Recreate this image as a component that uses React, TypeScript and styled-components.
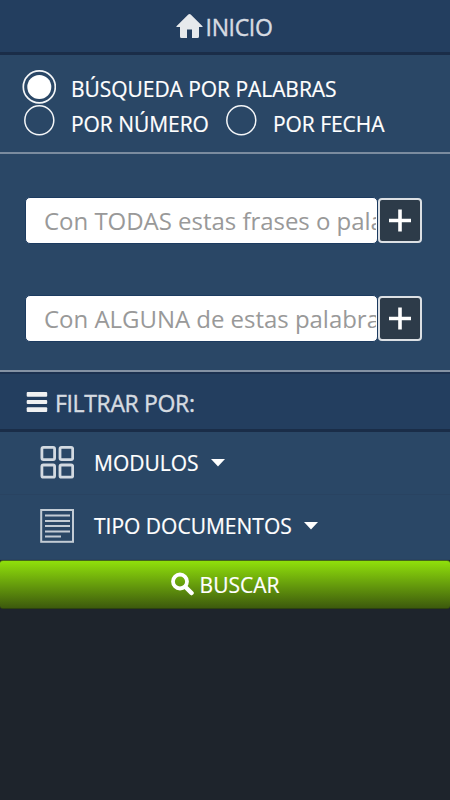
import React from 'react';
import styled, { createGlobalStyle } from 'styled-components';

const GlobalStyle = createGlobalStyle`
  * { box-sizing: border-box; }
  body { margin: 0; background: #1e242c; font-family: "Open Sans", sans-serif; color: #fff; }
  svg { display: block; flex: none; }
`;

const Page = styled.main`
  min-height: 800px;
  background: #1e242c;
`;

const Label = styled.span`
  font-size: 21px;
  line-height: 28px;
  white-space: nowrap;
  -webkit-text-stroke: 0.2px currentColor;
`;

const Bar = styled.header`
  display: flex;
  align-items: center;
  justify-content: center;
  gap: 3px;
  height: 55px;
  padding: 0 2px 1px 0;
  background: #233e5f;
  border-bottom: 3px solid #1a2d48;
  color: #d6dbe1;
  ${Label} {
    padding-top: 3px;
    font-size: 23px;
    letter-spacing: -0.35px;
    -webkit-text-stroke-width: 0.4px;
  }
`;

const FilterBar = styled(Bar)`
  justify-content: flex-start;
  gap: 7px;
  height: 60px;
  padding: 0 0 0 26px;
  border-top: 2px solid #1c3150;
`;

const Modes = styled.section`
  height: 99px;
  padding: 15px 0 0 22px;
  background: #2a4766;
  border-bottom: 2px solid #7b8c9f;
`;

const ModeRow = styled.div`
  display: flex;
  height: 34px;
`;

const Mode = styled.label<{ $width?: number; $drop?: number }>`
  display: flex;
  width: ${p => (p.$width ? `${p.$width}px` : 'auto')};
  gap: 15px;
  ${Label} { margin-top: ${p => p.$drop ?? 5}px; letter-spacing: -0.05px; }
`;

const Search = styled.section`
  display: flex;
  flex-direction: column;
  gap: 51px;
  height: 218px;
  padding: 43px 27px 0 25px;
  background: #2a4766;
  border-bottom: 2px solid #8492a4;
`;

const Field = styled.div`
  display: flex;
  height: 47px;
`;

const Input = styled.input`
  width: 353px;
  height: 47px;
  padding: 0 1px 0 18px;
  border: 1px solid #1c3b60;
  border-radius: 5px;
  background: #fff;
  font: 24px "Open Sans", sans-serif;
  letter-spacing: -0.03px;
  outline: none;
  &::placeholder { color: #999; opacity: 1; }
`;

const Add = styled.button`
  display: grid;
  place-items: center;
  width: 44px;
  height: 45px;
  margin-top: 1px;
  padding: 0;
  border: 2px solid #dce0e4;
  border-radius: 4px;
  background: #2d3b49;
`;

const FilterRow = styled.div<{ $h: number; $lift: number }>`
  display: flex;
  align-items: center;
  height: ${p => p.$h}px;
  padding: 0 0 ${p => p.$lift}px 40px;
  background: #2a4766;
  border-bottom: 1px solid #294361;
  ${Label} { margin: 0 12px 0 20px; }
`;

const Submit = styled.button`
  display: flex;
  align-items: center;
  justify-content: center;
  gap: 5px;
  width: 100%;
  height: 49px;
  padding: 0;
  border: 0;
  border-top: 1px solid #44661d;
  border-bottom: 1px solid #2c4210;
  border-radius: 3px;
  background: linear-gradient(#90e00b, #3d5a0d);
  color: #fff;
  font-family: inherit;
  svg { margin-bottom: 1px; }
`;

const Radio = ({ checked = false }: { checked?: boolean }) => (
  <svg width="34" height="34" viewBox="0 0 34 34" fill="none" stroke="#f4f6f8">
    {checked ? (
      <>
        <circle cx="17.3" cy="16.9" r="16" strokeWidth="1.7" />
        <circle cx="17.3" cy="16.9" r="12" fill="#fff" stroke="none" />
      </>
    ) : (
      <circle cx="17.3" cy="16.3" r="14.5" strokeWidth="1.5" />
    )}
  </svg>
);

const Home = () => (
  <svg width="27" height="24" viewBox="0 0 27 24" fill="#e6e9ec">
    <path d="M12.3.5Q13.5-.5 14.7.5L26.8 12.4Q27 13 26 13H23v9.5q0 1.5-1.5 1.5H16v-8.5h-5V24H5.5q-1.5 0-1.5-1.5V13H1Q0 13 .2 12.400z" />
  </svg>
);

const Menu = () => (
  <svg width="22" height="20" viewBox="0 0 22 20" fill="#f0f1f2">
    <rect width="20.5" height="4.8" x=".7" rx="1" />
    <rect width="20.5" height="4" x=".7" y="8" rx="1" />
    <rect width="20.5" height="4.8" x=".7" y="15.2" rx="1" />
  </svg>
);

const Plus = () => (
  <svg width="24" height="24" viewBox="0 0 24 24" stroke="#fff" strokeWidth="3.600">
    <path d="M12 .5v22M1 11.5h22" />
  </svg>
);

const Grid = () => (
  <svg width="34" height="34" viewBox="0 0 34 34" fill="none" stroke="#d3dae1" strokeWidth="2.8">
    <rect x="1.9" y="1.4" width="12.7" height="12.2" rx="1.5" />
    <rect x="20" y="1.4" width="12.7" height="12.2" rx="1.5" />
    <rect x="1.9" y="19" width="12.7" height="12.2" rx="1.5" />
    <rect x="20" y="19" width="12.7" height="12.2" rx="1.5" />
  </svg>
);

const Document = () => (
  <svg width="34" height="34" viewBox="0 0 34 34" fill="none" stroke="#c3ccd5" strokeWidth="2">
    <rect x="1.2" y="1" width="31.8" height="31.8" />
    <path d="M5 6.5h25M5 12h25M5 17h25M5 22.5h25M5 27.5h16" />
  </svg>
);

const Lens = () => (
  <svg width="24" height="24" viewBox="0 0 24 24" fill="none" stroke="#fff">
    <circle cx="9" cy="9.500" r="7" strokeWidth="3.8" />
    <path d="M14.500 15l6 6" strokeWidth="4.5" strokeLinecap="round" />
  </svg>
);

const Caret = () => (
  <svg width="14" height="8" viewBox="0 0 14 8" fill="#fff"><path d="M0 0h14L7 7.5z" /></svg>
);

export default function App() {
  return (
    <>
      <GlobalStyle />
      <Page>
        <Bar><Home /><Label>INICIO</Label></Bar>
        <Modes>
          <ModeRow><Mode><Radio checked /><Label>BÚSQUEDA POR PALABRAS</Label></Mode></ModeRow>
          <ModeRow>
            <Mode $width={202} $drop={6}><Radio /><Label>POR NÚMERO</Label></Mode>
            <Mode $drop={6}><Radio /><Label>POR FECHA</Label></Mode>
          </ModeRow>
        </Modes>
        <Search>
          <Field><Input placeholder="Con TODAS estas frases o palabras" /><Add><Plus /></Add></Field>
          <Field><Input placeholder="Con ALGUNA de estas palabras" /><Add><Plus /></Add></Field>
        </Search>
        <FilterBar><Menu /><Label>FILTRAR POR:</Label></FilterBar>
        <FilterRow $h={63} $lift={0}><Grid /><Label>MODULOS</Label><Caret /></FilterRow>
        <FilterRow $h={65} $lift={3}><Document /><Label>TIPO DOCUMENTOS</Label><Caret /></FilterRow>
        <Submit><Lens /><Label>BUSCAR</Label></Submit>
      </Page>
    </>
  );
}
